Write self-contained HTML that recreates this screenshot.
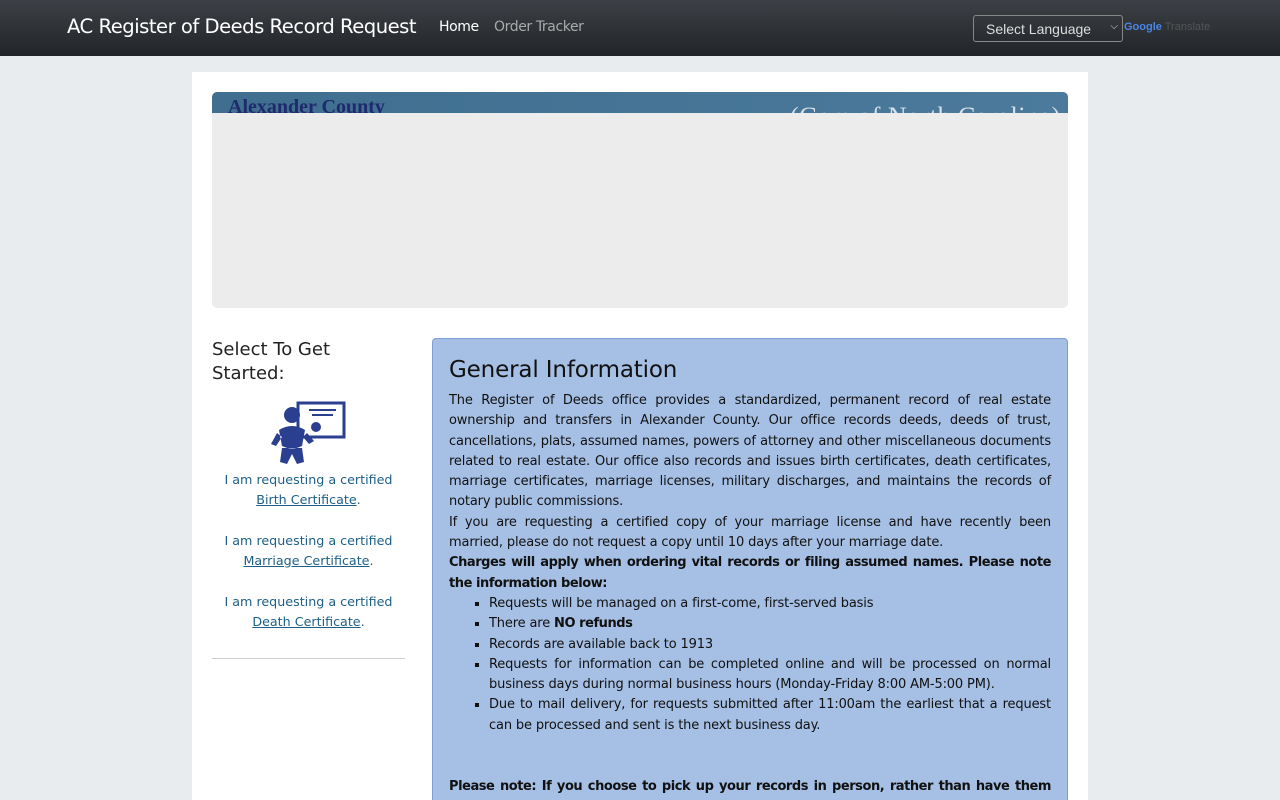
<!DOCTYPE html>
<html style="width:1280px;height:800px;overflow:hidden"><head><meta charset="utf-8"><style>
body{margin:0;background:#e9ecef;font-family:"Liberation Sans",sans-serif;width:1280px;height:800px;overflow:hidden;position:relative}
.nav{height:56px;background:linear-gradient(#3d4146,#212428);position:relative;}
.brand{position:absolute;left:67px;top:15px;color:#fff;font-size:19.6px;font-family:"DejaVu Sans",sans-serif;letter-spacing:-0.5px;}
.nl{position:absolute;top:19px;font-size:14px;font-family:"DejaVu Sans",sans-serif;letter-spacing:-0.4px}
.sel{position:absolute;left:973px;top:15px;width:150px;height:27px;border:1px solid #888;border-radius:3px;color:#ddd;font-size:14px;box-sizing:border-box;padding:5px 12px;}
.main{position:absolute;left:192px;top:72px;width:896px;height:728px;background:#fff;overflow:hidden}
.ban{position:absolute;left:20px;top:20px;width:856px;height:216px;background:#ececec;border-radius:5px;overflow:hidden}
.ban .t{height:21px;background:linear-gradient(90deg,#3f6e8f,#4b7a9c);position:relative;overflow:hidden}
.ban .t span{position:absolute;left:16px;top:4px;font-family:"Liberation Serif",serif;font-weight:bold;font-size:20px;color:#1e2a6b}
.ban .t i{position:absolute;left:578px;top:10px;font-family:"Liberation Serif",serif;font-size:26px;color:#d8e0ea;font-style:normal;letter-spacing:0.5px;white-space:nowrap}
.left{position:absolute;left:20px;top:266px;width:193px;font-family:"DejaVu Sans",sans-serif}
.left h3{margin:0;font-weight:normal;font-size:18px;line-height:24px;color:#222}
.lk{text-align:center;color:#1d5f86;font-size:12.7px;line-height:20px;margin-bottom:21px}
.lk *{line-height:20px}
.lk u{color:#1d5f86}
.box{position:absolute;left:240px;top:266px;width:602px;height:500px;background:#a6bfe4;border:1px solid #7d9fd6;border-radius:4px;padding:16px;font-family:"DejaVu Sans",sans-serif;font-size:13px;letter-spacing:-0.15px;line-height:20.3px;color:#111;text-align:justify}
.box *{line-height:20.3px}
.box b{letter-spacing:-0.45px}
.box h2{margin:0 0 6px;font-weight:normal;font-size:23px;line-height:30px!important}
ul{margin:0;padding-left:40px;list-style:square}
</style></head><body>
<div class="nav"><div class="brand">AC Register of Deeds Record Request</div>
<div class="nl" style="left:439px;color:#fff">Home</div><div class="nl" style="left:494px;color:#aaa">Order Tracker</div>
<div class="sel">Select Language <span style="float:right;font-size:10px;margin-right:-8px">&#x2335;</span></div>
<div style="position:absolute;left:1124px;top:21px;font-size:11px;color:#888"><b style="color:#4a86e8">Google</b> <span style="color:#555">Translate</span></div></div>
<div class="main">
<div class="ban"><div class="t"><span>Alexander County</span><i>(Gem of North Carolina)</i></div></div>
<div class="left"><h3>Select To Get Started:</h3>
<svg width="193" height="70" viewBox="0 0 193 70" style="display:block;margin-top:14px"><rect x="86" y="3" width="46" height="34" fill="#fff" stroke="#2a3f8f" stroke-width="3"/><line x1="97" y1="10" x2="124" y2="10" stroke="#2a3f8f" stroke-width="2"/><line x1="100" y1="15" x2="121" y2="15" stroke="#2a3f8f" stroke-width="2"/><circle cx="104" cy="27" r="5" fill="#2a3f8f"/><circle cx="80" cy="15" r="8" fill="#2a3f8f"/><path d="M67 30 Q80 22 93 30 L90 46 Q80 51 70 46Z M65 33 L59 44 L64 46 L70 37Z M95 33 L102 41 L97 44 L91 37Z M70 48 L68 62 L75 64 L80 54 L85 64 L92 62 L90 48Z" fill="#2a3f8f"/></svg>
<div class="lk">I am requesting a certified<br><u>Birth Certificate</u>.</div>
<div class="lk">I am requesting a certified<br><u>Marriage Certificate</u>.</div>
<div class="lk">I am requesting a certified<br><u>Death Certificate</u>.</div>
<hr style="border:0;border-top:1px solid #ccc;margin-top:26px"></div>
<div class="box"><h2>General Information</h2>
The Register of Deeds office provides a standardized, permanent record of real estate ownership and transfers in Alexander County. Our office records deeds, deeds of trust, cancellations, plats, assumed names, powers of attorney and other miscellaneous documents related to real estate. Our office also records and issues birth certificates, death certificates, marriage certificates, marriage licenses, military discharges, and maintains the records of notary public commissions.<br>
If you are requesting a certified copy of your marriage license and have recently been married, please do not request a copy until 10 days after your marriage date.<br>
<b>Charges will apply when ordering vital records or filing assumed names. Please note the information below:</b>
<ul><li>Requests will be managed on a first-come, first-served basis</li><li>There are <b>NO refunds</b></li><li>Records are available back to 1913</li><li>Requests for information can be completed online and will be processed on normal business days during normal business hours (Monday-Friday 8:00 AM-5:00 PM).</li><li>Due to mail delivery, for requests submitted after 11:00am the earliest that a request can be processed and sent is the next business day.</li></ul>
<br><br><b>Please note: If you choose to pick up your records in person, rather than have them sent through mail, you will be required to present a valid government issued photo identification.</b>
</div></div>
</body></html>
